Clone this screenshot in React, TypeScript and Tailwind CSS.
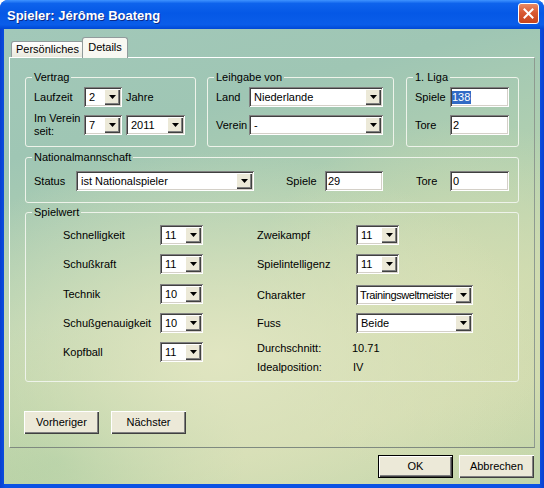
import React from "react";

const sunken =
  "shadow-[inset_1px_1px_0_#808080,inset_-1px_-1px_0_#ffffff,inset_2px_2px_0_#404040,inset_-2px_-2px_0_#d4d0c8]";
const raised =
  "shadow-[inset_1px_1px_0_#ffffff,inset_-1px_-1px_0_#404040,inset_-2px_-2px_0_#808080]";

function Arrow() {
  return (
    <svg width="7" height="4" viewBox="0 0 7 4">
      <path d="M0 0h7L3.5 4z" fill="#000" />
    </svg>
  );
}

function Combo({ value, w, tight }: { value: string; w: string; tight?: boolean }) {
  return (
    <div className={`${w} h-[20px] shrink-0 bg-white p-[2px] flex ${sunken}`}>
      <div
        className={
          tight
            ? "flex-1 pl-[2px] leading-[16px] overflow-hidden whitespace-nowrap tracking-[-0.4px]"
            : "flex-1 pl-[3px] leading-[16px] overflow-hidden whitespace-nowrap"
        }
      >
        {value}
      </div>
      <div className={`w-[16px] h-[16px] shrink-0 bg-[#ece9d8] flex items-center justify-center ${raised}`}>
        <Arrow />
      </div>
    </div>
  );
}

function Input({ value, w, selected }: { value: string; w: string; selected?: boolean }) {
  return (
    <div className={`${w} h-[20px] shrink-0 bg-white p-[2px] flex ${sunken}`}>
      <div className="flex-1 leading-[16px] whitespace-nowrap">
        {selected ? (
          <span className="inline-block bg-[#316ac5] text-white pr-[1px] leading-[13px] mt-[1px]">{value}</span>
        ) : (
          <span className="pl-[1px]">{value}</span>
        )}
      </div>
    </div>
  );
}

function Group({ title, className, children }: { title: string; className: string; children: React.ReactNode }) {
  return (
    <fieldset className={`border border-[#eef3ea] rounded-[3px] ${className}`}>
      <legend className="ml-[6px] px-[2px] leading-[13px]">{title}</legend>
      {children}
    </fieldset>
  );
}

function Btn({ label, def }: { label: string; def?: boolean }) {
  return (
    <div
      className={
        def
          ? "w-[75px] h-[23px] bg-[#ece9d8] border border-black flex items-center justify-center shadow-[inset_1px_1px_0_#ffffff,inset_-1px_-1px_0_#404040,inset_-2px_-2px_0_#808080]"
          : "w-[75px] h-[23px] bg-[#ece9d8] flex items-center justify-center shadow-[inset_1px_1px_0_#ffffff,inset_-1px_-1px_0_#404040,inset_-2px_-2px_0_#808080]"
      }
    >
      {label}
    </div>
  );
}

export default function App() {
  return (
    <div className="w-[544px] h-[488px] bg-white font-['Liberation_Sans',Arial,sans-serif] text-[11px] leading-[13px] text-black">
      <div className="w-full h-full flex flex-col rounded-t-[8px] overflow-hidden bg-[linear-gradient(to_right,#0840d0_0%,#0b52e4_1%,#0b52e4_99%,#0840d0_100%)]">
        {/* Title bar */}
        <div className="h-[29px] shrink-0 flex items-center pl-[7px] pr-[5px] bg-[linear-gradient(to_bottom,#3f93ff_0%,#0e63ec_12%,#0558e6_45%,#0a5de9_85%,#0048d6_100%)]">
          <div className="flex-1 pt-[2px] text-white font-bold text-[13px] font-['Liberation_Sans',Arial,sans-serif] [text-shadow:1px_1px_0_#0a2a8a]">
            Spieler: Jérôme Boateng
          </div>
          <div className="w-[21px] h-[21px] mt-[-3px] rounded-[3px] border border-white bg-[linear-gradient(to_bottom,#ea8a66_0%,#d95a33_45%,#c6441d_100%)] flex items-center justify-center">
            <svg width="11" height="11" viewBox="0 0 11 11">
              <path d="M1.5 1.5L9.5 9.5M9.5 1.5L1.5 9.5" stroke="#fff" strokeWidth="2" strokeLinecap="square" />
            </svg>
          </div>
        </div>

        {/* Client */}
        <div className="flex-1 mx-[4px] mb-[4px] pt-[8px] px-[5px] flex flex-col bg-[radial-gradient(ellipse_60%_45%_at_40%_72%,rgba(226,230,194,0.95)_0%,rgba(226,230,194,0)_100%),radial-gradient(ellipse_40%_40%_at_85%_60%,rgba(214,222,178,0.9)_0%,rgba(214,222,178,0)_100%),radial-gradient(ellipse_35%_30%_at_10%_95%,rgba(170,204,160,0.9)_0%,rgba(170,204,160,0)_100%),linear-gradient(165deg,#a2c8b9_0%,#9fc6b4_22%,#b2d0b0_45%,#c8d8ae_65%,#cfdaae_82%,#c0d5aa_100%)]">
          {/* Tabs */}
          <div className="h-[20px] shrink-0 flex items-end pl-[2px]">
            <div className="w-[73px] h-[16px] border border-b-0 border-[#919b9c] rounded-t-[3px] bg-[linear-gradient(to_bottom,#ffffff_0%,#f3f3ec_60%,#e8e8dc_100%)] flex items-center justify-center">
              Persönliches
            </div>
            <div className="relative z-10 ml-[-2px] mb-[-1px] w-[46px] h-[21px] border border-b-0 border-[#919b9c] rounded-t-[3px] bg-[#f8f8f2] flex justify-center pt-[3px]">
              Details
            </div>
          </div>

          {/* Panel */}
          <div className="h-[391px] shrink-0 border border-t-white border-l-white border-r-[#8e9a90] border-b-[#7f8a80] px-[15px] pt-[13px] flex flex-col">
            {/* Row 1 */}
            <div className="flex">
              <Group title="Vertrag" className="w-[171px]">
                <div className="pt-[3px] pl-[8px] pb-[11px]">
                  <div className="h-[20px] flex items-center">
                    <div className="w-[50px]">Laufzeit</div>
                    <Combo value="2" w="w-[38px]" />
                    <div className="ml-[4px]">Jahre</div>
                  </div>
                  <div className="h-[20px] mt-[8px] flex items-center">
                    <div className="w-[50px]">
                      Im Verein
                      <br />
                      seit:
                    </div>
                    <Combo value="7" w="w-[38px]" />
                    <div className="ml-[4px]">
                      <Combo value="2011" w="w-[59px]" />
                    </div>
                  </div>
                </div>
              </Group>
              <Group title="Leihgabe von" className="w-[187px] ml-[11px]">
                <div className="pt-[3px] pl-[8px] pb-[11px]">
                  <div className="h-[20px] flex items-center">
                    <div className="w-[33px]">Land</div>
                    <Combo value="Niederlande" w="w-[134px]" />
                  </div>
                  <div className="h-[20px] mt-[8px] flex items-center">
                    <div className="w-[33px]">Verein</div>
                    <Combo value="-" w="w-[134px]" />
                  </div>
                </div>
              </Group>
              <Group title="1. Liga" className="flex-1 ml-[12px]">
                <div className="pt-[3px] pl-[8px] pb-[11px]">
                  <div className="h-[20px] flex items-center">
                    <div className="w-[35px]">Spiele</div>
                    <Input value="138" w="w-[59px]" selected />
                  </div>
                  <div className="h-[20px] mt-[8px] flex items-center">
                    <div className="w-[35px]">Tore</div>
                    <Input value="2" w="w-[59px]" />
                  </div>
                </div>
              </Group>
            </div>

            {/* Nationalmannschaft */}
            <Group title="Nationalmannschaft" className="mt-[4px]">
              <div className="pt-[7px] pl-[8px] pb-[11px]">
                <div className="h-[20px] flex items-center">
                  <div className="w-[42px]">Status</div>
                  <Combo value="ist Nationalspieler" w="w-[178px]" />
                  <div className="w-[39px] ml-[32px]">Spiele</div>
                  <Input value="29" w="w-[58px]" />
                  <div className="w-[34px] ml-[33px]">Tore</div>
                  <Input value="0" w="w-[59px]" />
                </div>
              </div>
            </Group>

            {/* Spielwert */}
            <Group title="Spielwert" className="mt-[3px]">
              <div className="pt-[6px] pl-[37px] pb-[7px] flex items-start">
                <div className="w-[140px] flex flex-col">
                  <div className="h-[20px] flex items-center">
                    <div className="w-[97px]">Schnelligkeit</div>
                    <Combo value="11" w="w-[43px]" />
                  </div>
                  <div className="h-[20px] mt-[9px] flex items-center">
                    <div className="w-[97px]">Schußkraft</div>
                    <Combo value="11" w="w-[43px]" />
                  </div>
                  <div className="h-[20px] mt-[10px] flex items-center">
                    <div className="w-[97px]">Technik</div>
                    <Combo value="10" w="w-[43px]" />
                  </div>
                  <div className="h-[20px] mt-[9px] flex items-center">
                    <div className="w-[97px]">Schußgenauigkeit</div>
                    <Combo value="10" w="w-[43px]" />
                  </div>
                  <div className="h-[20px] mt-[9px] flex items-center">
                    <div className="w-[97px]">Kopfball</div>
                    <Combo value="11" w="w-[43px]" />
                  </div>
                </div>
                <div className="ml-[54px] flex flex-col">
                  <div className="h-[20px] flex items-center">
                    <div className="w-[99px]">Zweikampf</div>
                    <Combo value="11" w="w-[43px]" />
                  </div>
                  <div className="h-[20px] mt-[9px] flex items-center">
                    <div className="w-[99px]">Spielintelligenz</div>
                    <Combo value="11" w="w-[43px]" />
                  </div>
                  <div className="h-[20px] mt-[11px] flex items-center">
                    <div className="w-[99px]">Charakter</div>
                    <Combo value="Trainingsweltmeister" w="w-[117px]" tight />
                  </div>
                  <div className="h-[20px] mt-[8px] flex items-center">
                    <div className="w-[99px]">Fuss</div>
                    <Combo value="Beide" w="w-[117px]" />
                  </div>
                  <div className="h-[13px] mt-[9px] flex items-center">
                    <div className="w-[95px]">Durchschnitt:</div>
                    <div>10.71</div>
                  </div>
                  <div className="h-[13px] mt-[6px] flex items-center">
                    <div className="w-[96px]">Idealposition:</div>
                    <div>IV</div>
                  </div>
                </div>
              </div>
            </Group>

            {/* Prev/Next */}
            <div className="mt-[29px] ml-[-1px] flex gap-[12px]">
              <Btn label="Vorheriger" />
              <Btn label="Nächster" />
            </div>
          </div>

          {/* OK / Cancel */}
          <div className="mt-[7px] pr-[1px] flex justify-end gap-[6px]">
            <Btn label="OK" def />
            <Btn label="Abbrechen" />
          </div>
        </div>
      </div>
    </div>
  );
}
